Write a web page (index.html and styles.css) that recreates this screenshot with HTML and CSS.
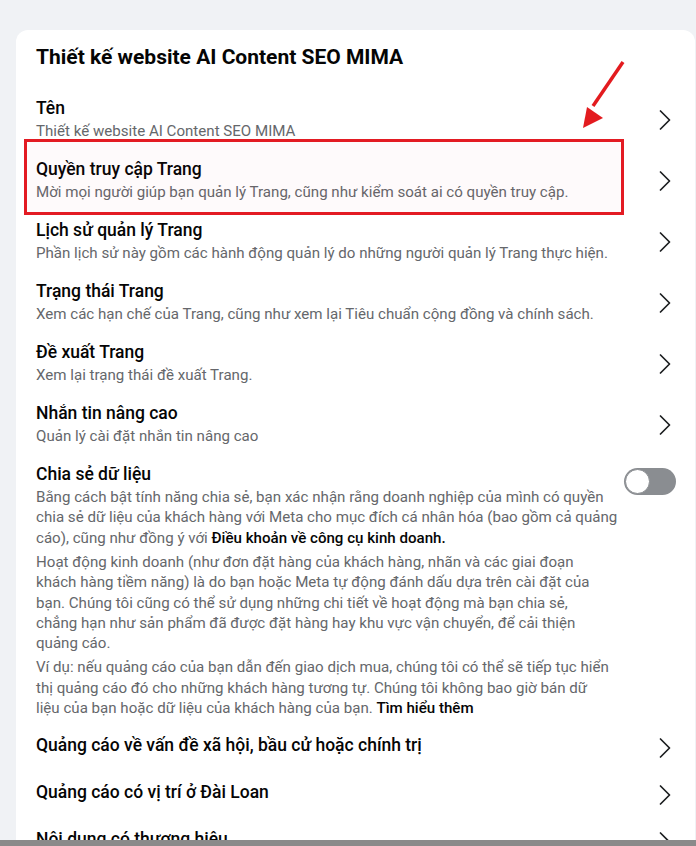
FILE: index.html
```html
<!DOCTYPE html>
<html lang="vi">
<head>
<meta charset="utf-8">
<title>Cài đặt Trang</title>
<link rel="stylesheet" href="styles.css">
</head>
<body>
<div class="viewport">
  <div class="scroll">
    <section class="card">
      <h1 class="card-title">Thiết kế website AI Content SEO MIMA</h1>

      <div class="row">
        <div class="row-text">
          <div class="row-title">Tên</div>
          <div class="row-desc">Thiết kế website AI Content SEO MIMA</div>
        </div>
        <svg class="chev" viewBox="0 0 12 20"><polyline points="1.5,1 10.5,10 1.5,19"/></svg>
      </div>

      <div class="row">
        <div class="row-text">
          <div class="row-title">Quyền truy cập Trang</div>
          <div class="row-desc">Mời mọi người giúp bạn quản lý Trang, cũng như kiểm soát ai có quyền truy cập.</div>
        </div>
        <svg class="chev" viewBox="0 0 12 20"><polyline points="1.5,1 10.5,10 1.5,19"/></svg>
      </div>

      <div class="row">
        <div class="row-text">
          <div class="row-title">Lịch sử quản lý Trang</div>
          <div class="row-desc">Phần lịch sử này gồm các hành động quản lý do những người quản lý Trang thực hiện.</div>
        </div>
        <svg class="chev" viewBox="0 0 12 20"><polyline points="1.5,1 10.5,10 1.5,19"/></svg>
      </div>

      <div class="row">
        <div class="row-text">
          <div class="row-title">Trạng thái Trang</div>
          <div class="row-desc">Xem các hạn chế của Trang, cũng như xem lại Tiêu chuẩn cộng đồng và chính sách.</div>
        </div>
        <svg class="chev" viewBox="0 0 12 20"><polyline points="1.5,1 10.5,10 1.5,19"/></svg>
      </div>

      <div class="row">
        <div class="row-text">
          <div class="row-title">Đề xuất Trang</div>
          <div class="row-desc">Xem lại trạng thái đề xuất Trang.</div>
        </div>
        <svg class="chev" viewBox="0 0 12 20"><polyline points="1.5,1 10.5,10 1.5,19"/></svg>
      </div>

      <div class="row">
        <div class="row-text">
          <div class="row-title">Nhắn tin nâng cao</div>
          <div class="row-desc">Quản lý cài đặt nhắn tin nâng cao</div>
        </div>
        <svg class="chev" viewBox="0 0 12 20"><polyline points="1.5,1 10.5,10 1.5,19"/></svg>
      </div>

      <div class="row row-top">
        <div class="row-text">
          <div class="row-title">Chia sẻ dữ liệu</div>
          <p class="row-desc para">Bằng cách bật tính năng chia sẻ, bạn xác nhận rằng doanh nghiệp của mình có quyền<br>chia sẻ dữ liệu của khách hàng với Meta cho mục đích cá nhân hóa (bao gồm cả quảng<br>cáo), cũng như đồng ý với <b>Điều khoản về công cụ kinh doanh.</b></p>
          <p class="row-desc para">Hoạt động kinh doanh (như đơn đặt hàng của khách hàng, nhãn và các giai đoạn<br>khách hàng tiềm năng) là do bạn hoặc Meta tự động đánh dấu dựa trên cài đặt của<br>bạn. Chúng tôi cũng có thể sử dụng những chi tiết về hoạt động mà bạn chia sẻ,<br>chẳng hạn như sản phẩm đã được đặt hàng hay khu vực vận chuyển, để cải thiện<br>quảng cáo.</p>
          <p class="row-desc para">Ví dụ: nếu quảng cáo của bạn dẫn đến giao dịch mua, chúng tôi có thể sẽ tiếp tục hiển<br>thị quảng cáo đó cho những khách hàng tương tự. Chúng tôi không bao giờ bán dữ<br>liệu của bạn hoặc dữ liệu của khách hàng của bạn. <b>Tìm hiểu thêm</b></p>
        </div>
        <span class="toggle"><span class="knob"></span></span>
      </div>

      <div class="row row-single">
        <div class="row-text">
          <div class="row-title">Quảng cáo về vấn đề xã hội, bầu cử hoặc chính trị</div>
        </div>
        <svg class="chev" viewBox="0 0 12 20"><polyline points="1.5,1 10.5,10 1.5,19"/></svg>
      </div>

      <div class="row row-single">
        <div class="row-text">
          <div class="row-title">Quảng cáo có vị trí ở Đài Loan</div>
        </div>
        <svg class="chev" viewBox="0 0 12 20"><polyline points="1.5,1 10.5,10 1.5,19"/></svg>
      </div>

      <div class="row row-single">
        <div class="row-text">
          <div class="row-title">Nội dung có thương hiệu</div>
        </div>
        <svg class="chev" viewBox="0 0 12 20"><polyline points="1.5,1 10.5,10 1.5,19"/></svg>
      </div>

      <div class="highlight-box"></div>
      <svg class="pointer-arrow" viewBox="0 0 80 110" width="80" height="110">
        <line x1="71" y1="2" x2="41" y2="46"/>
        <polygon points="31,68 35,47 51,58"/>
      </svg>
    </section>
  </div>
  <div class="hbar"></div>
</div>
</body>
</html>
```

FILE: styles.css
```css
html, body {
  margin: 0;
  padding: 0;
}

body {
  background: #f0f2f5;
  font-family: Roboto, "Noto Sans", "Liberation Sans", sans-serif;
  color: #050505;
}

.viewport {
  height: 846px;
  display: flex;
  flex-direction: column;
  overflow: hidden;
}

.scroll {
  flex: 1;
  min-height: 0;
  overflow: hidden;
  padding: 30px 1px 0 16px;
}

.hbar {
  height: 6px;
  background: #8a8a8a;
  flex: none;
}

.card {
  position: relative;
  background: #ffffff;
  border-radius: 12px 12px 0 0;
  padding: 15px 20px 0 20px;
}

.card-title {
  margin: 0 0 20px 0;
  font-size: 21px;
  line-height: 24px;
  font-weight: 700;
  color: #050505;
}

.row {
  display: flex;
  align-items: center;
  gap: 12px;
  padding: 9px 0;
}

.row-top {
  align-items: flex-start;
  padding-bottom: 3px;
}

.row-single {
  padding: 13.5px 0;
}

.row-single .chev {
  margin-top: 3px;
  margin-bottom: -3px;
}

.row-text {
  flex: 1;
  min-width: 0;
}

.row-title {
  font-size: 17.5px;
  line-height: 20px;
  font-weight: 500;
  color: #050505;
}

.row-desc {
  margin: 3px 0 0 0;
  font-size: 15.1px;
  line-height: 20px;
  color: #65676b;
  white-space: nowrap;
}

.para {
  line-height: 20.4px;
}

.para + .para {
  margin-top: 3.5px;
}

.para b {
  font-weight: 500;
  color: #050505;
}

.chev {
  flex: none;
  width: 12px;
  height: 20px;
  margin-right: 4px;
  fill: none;
  stroke: #1c1e21;
  stroke-width: 1.7;
  stroke-linecap: round;
  stroke-linejoin: round;
}

.toggle {
  flex: none;
  width: 52px;
  height: 27px;
  margin-top: 4px;
  margin-right: -1px;
  border-radius: 14px;
  background: #8a8d91;
  display: flex;
  align-items: center;
  padding: 0 1px;
  box-sizing: border-box;
}

.knob {
  width: 25px;
  height: 25px;
  border-radius: 50%;
  background: #ffffff;
  box-sizing: border-box;
  border: 1px solid #8a8d91;
}

.highlight-box {
  position: absolute;
  left: 8px;
  top: 109px;
  width: 600px;
  height: 76px;
  box-sizing: border-box;
  border: 3px solid #e31b23;
  background: rgba(230, 40, 90, 0.025);
  pointer-events: none;
}

.pointer-arrow {
  position: absolute;
  left: 536px;
  top: 30px;
  pointer-events: none;
}

.pointer-arrow line {
  stroke: #e31b1f;
  stroke-width: 3.5;
}

.pointer-arrow polygon {
  fill: #e31b1f;
}
```
